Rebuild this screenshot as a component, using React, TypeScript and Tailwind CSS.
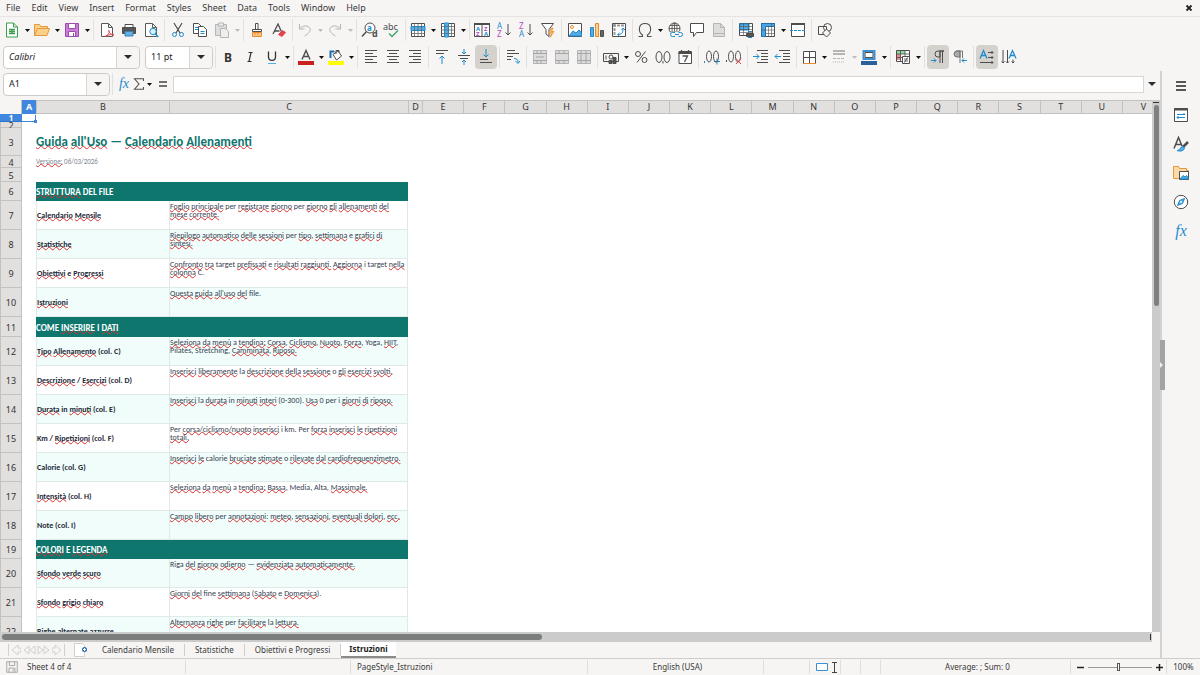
import React from 'react';
import type { ReactNode } from 'react';

type Row = {
  n: number
  h: string
  kind: 'empty' | 'title' | 'date' | 'section' | 'item'
  alt?: boolean
  label?: string
  lines?: string[]
}

// text between asterisks is flagged by the spell checker
const rows: Row[] = [
  { n: 1, h: 'h-[8px]', kind: 'empty' },
  { n: 2, h: 'h-[6px]', kind: 'empty' },
  { n: 3, h: 'h-[28px]', kind: 'title', label: "*Guida* *all'Uso* — *Calendario* *Allenamenti*" },
  { n: 4, h: 'h-[12px]', kind: 'date', label: '*Versione:* 06/03/2026' },
  { n: 5, h: 'h-[14px]', kind: 'empty' },
  { n: 6, h: 'h-[19px]', kind: 'section', label: '*STRUTTURA* DEL FILE' },
  { n: 7, h: 'h-[29px]', kind: 'item', label: '*Calendario* *Mensile*', lines: ['*Foglio* *principale* per *registrare* *giorno* per *giorno* *gli* *allenamenti* *del*', '*mese* *corrente.*'] },
  { n: 8, h: 'h-[29px]', kind: 'item', alt: true, label: '*Statistiche*', lines: ['*Riepilogo* *automatico* *delle* *sessioni* per *tipo*, *settimana* e *grafici* *di*', '*sintesi.*'] },
  { n: 9, h: 'h-[29px]', kind: 'item', label: '*Obiettivi* e *Progressi*', lines: ['*Confronto* *tra* target *prefissati* e *risultati* *raggiunti.* *Aggiorna* i target *nella*', '*colonna* C.'] },
  { n: 10, h: 'h-[29px]', kind: 'item', alt: true, label: '*Istruzioni*', lines: ["*Questa* *guida* *all'uso* *del* file."] },
  { n: 11, h: 'h-[20px]', kind: 'section', label: 'COME *INSERIRE* I *DATI*' },
  { n: 12, h: 'h-[29px]', kind: 'item', alt: true, label: '*Tipo* *Allenamento* (col. C)', lines: ['*Seleziona* *da* *menù* a *tendina:* *Corsa*, *Ciclismo*, *Nuoto*, *Forza*, Yoga, *HIIT*,', 'Pilates, Stretching, *Camminata*, *Riposo.*'] },
  { n: 13, h: 'h-[29px]', kind: 'item', label: '*Descrizione* / *Esercizi* (col. D)', lines: ['*Inserisci* *liberamente* la *descrizione* *della* *sessione* o *gli* *esercizi* *svolti.*'] },
  { n: 14, h: 'h-[29px]', kind: 'item', alt: true, label: '*Durata* in *minuti* (col. E)', lines: ['*Inserisci* la *durata* in *minuti* *interi* (0-300). *Usa* 0 per i *giorni* *di* *riposo.*'] },
  { n: 15, h: 'h-[29px]', kind: 'item', label: 'Km / *Ripetizioni* (col. F)', lines: ['Per *corsa/ciclismo/nuoto* *inserisci* i km. Per *forza* *inserisci* *le* *ripetizioni*', '*totali.*'] },
  { n: 16, h: 'h-[29px]', kind: 'item', alt: true, label: 'Calorie (col. G)', lines: ['*Inserisci* *le* calorie *bruciate* *stimate* o *rilevate* *dal* *cardiofrequenzimetro.*'] },
  { n: 17, h: 'h-[29px]', kind: 'item', label: '*Intensità* (col. H)', lines: ['*Seleziona* *da* *menù* a *tendina:* *Bassa*, Media, Alta, *Massimale.*'] },
  { n: 18, h: 'h-[29px]', kind: 'item', alt: true, label: 'Note (col. I)', lines: ['*Campo* *libero* per *annotazioni*: *meteo*, *sensazioni*, *eventuali* *dolori*, *ecc.*'] },
  { n: 19, h: 'h-[19px]', kind: 'section', label: '*COLORI* E *LEGENDA*' },
  { n: 20, h: 'h-[29px]', kind: 'item', alt: true, label: '*Sfondo* *verde* *scuro*', lines: ['Riga *del* *giorno* *odierno* — *evidenziata* *automaticamente.*'] },
  { n: 21, h: 'h-[29px]', kind: 'item', label: '*Sfondo* *grigio* *chiaro*', lines: ['*Giorni* *del* fine *settimana* (*Sabato* e *Domenica*).'] },
  { n: 22, h: 'h-[29px]', kind: 'item', alt: true, label: '*Righe* *alternate* *azzurre*', lines: ['*Alternanza* *righe* per *facilitare* la *lettura.*'] },
];

const wideCols = 'EFGHIJKLMNOPQRSTU'.split('');

const Spell = ({ text }: { text: string }) => (
  <>
    {text.split('*').map((part, i) =>
      i % 2 === 1 ? (
        <span key={i} className="underline decoration-[#d93030] decoration-wavy decoration-1 underline-offset-[-1px] [text-decoration-skip-ink:none]">{part}</span>
      ) : (
        <span key={i}>{part}</span>
      )
    )}
  </>
);

const Svg = ({ children, size = 'w-4 h-4' }: { children: ReactNode; size?: string }) => (
  <svg viewBox="0 0 16 16" fill="none" stroke="#4d4d4d" strokeWidth="1" className={`${size} shrink-0 overflow-visible`}>
    {children}
  </svg>
);

const T = ({ x, y, s, c = '#4d4d4d', b, children }: { x: number; y: number; s: number; c?: string; b?: boolean; children: ReactNode }) => (
  <text x={x} y={y} fontSize={s} fill={c} stroke="none" fontWeight={b ? 700 : 400} fontFamily="Noto Sans, sans-serif">{children}</text>
);

const Btn = ({ label, on, children }: { label: string; on?: boolean; children: ReactNode }) => (
  <button type="button" aria-label={label} className={on ? 'flex items-center justify-center w-[22px] h-6 shrink-0 rounded bg-[#d5d1cd]' : 'flex items-center justify-center w-[22px] h-6 shrink-0 rounded'}>
    <Svg>{children}</Svg>
  </button>
);

const Caret = ({ off, label }: { off?: boolean; label: string }) => (
  <button type="button" aria-label={label} className="flex items-center justify-center w-2 h-6 shrink-0">
    <svg viewBox="0 0 5 3" className="w-[5px] h-[3px]">
      <path d="M0 0h5L2.500 3z" fill={off ? '#bdbdbd' : '#111'} />
    </svg>
  </button>
);

const Sep = ({ tight }: { tight?: boolean }) => (
  <div className={tight ? 'flex justify-center w-1 h-[22px] shrink-0' : 'flex justify-center w-[5px] h-[22px] shrink-0'}>
    <div className="w-px bg-[#e3e1df]"></div>
  </div>
);

const BLUE = '#1e8bcd';
const GREY = '#b5b5b5';

const MenuBar = () => (
  <nav className="flex items-center h-[17px] px-1.5 border-b border-[#e6e4e2] text-[9px] leading-4 text-[#3a3a3a]">
    <div className="flex items-center gap-[11px]">
      {['File', 'Edit', 'View', 'Insert', 'Format', 'Styles', 'Sheet', 'Data', 'Tools', 'Window', 'Help'].map((m) => (
        <button key={m} type="button">{m}</button>
      ))}
    </div>
    <button type="button" aria-label="Close document" className="ml-auto">
      <svg viewBox="0 0 10 10" className="w-2.5 h-2.5"><path d="M2.5 2.5l5 5M7.5 2.5l-5 5" stroke="#222" strokeWidth="1.8" /></svg>
    </button>
  </nav>
);

const Page = ({ c = '#5a5a5a' }: { c?: string }) => <path d="M2.5 1.5h7l4 4v9h-11zM9.5 1.5v4h4" stroke={c} fill="#fff" />;

const StandardBar = () => (
  <div className="flex items-center h-[26px] pl-px">
    <Btn label="New">
      <path d="M2.5 1h7l4 4v10h-11zM9.5 1v4h4" stroke="#3a9f4c" fill="#fff" />
      <path d="M5 7.500h6M5 9.500h6M5 11.500h6M8 7v5" stroke="#3a9f4c" strokeWidth="1.300" />
    </Btn>
    <Caret label="New options" />
    <Btn label="Open"><path d="M.5 13.500v-11h5l1 2h7v2M.5 13.500l3-7h12l-2.500 7z" fill="#fbd08a" stroke="#e5973a" /></Btn>
    <Caret label="Open options" />
    <Btn label="Save">
      <path d="M1.500 1.500h13v13h-13z" fill="#c97fd4" stroke="#9b4bab" />
      <path d="M4.500 1.500h7v5h-7zM4.500 9.500h7v5h-7z" fill="#fff" stroke="#9b4bab" />
      <path d="M9.500 11v3" stroke="#9b4bab" />
    </Btn>
    <Caret label="Save options" />
    <Sep />
    <Btn label="Export as PDF">
      <Page />
      <path d="M6 14.500c3-1 5-4 4-6-1-1 0 4 5 4.500-3-1-6 0-9 1.500z" stroke="#e0434b" />
    </Btn>
    <Btn label="Print">
      <path d="M4 2.500h8V6H4z" fill="#fff" />
      <path d="M1.500 5.500h13v6h-13z" fill="#555" />
      <path d="M4 9.500h8v4.500H4z" fill="#63b1e5" stroke="#3c7eb0" />
    </Btn>
    <Btn label="Print preview">
      <Page />
      <circle cx="10" cy="9.500" r="3.200" stroke={BLUE} fill="#d9effb" /><path d="M12.300 12l3 3" stroke={BLUE} strokeWidth="1.400" />
    </Btn>
    <Sep />
    <Btn label="Cut">
      <path d="M4 1l6 10M12 1L6 11" strokeWidth="1.200" />
      <circle cx="4.500" cy="12.500" r="2" stroke={BLUE} /><circle cx="11.500" cy="12.500" r="2" stroke={BLUE} />
    </Btn>
    <Btn label="Copy">
      <path d="M1.500 1.500h5l3 3v7h-8z" fill="#fff" /><path d="M6.500 4.500h5l3 3v7h-8z" fill="#fff" />
      <path d="M3 5.500h3M3 7.500h3M8.500 9.500h4M8.500 11.500h4" stroke={BLUE} />
    </Btn>
    <Btn label="Paste"><path d="M1.500 2.500h11v11h-11z" fill="#ddd" stroke={GREY} /><path d="M4.500 1h5v3h-5zM6.500 6.500h5l3 3v6h-8z" fill="#eee" stroke={GREY} /></Btn>
    <Caret label="Paste options" off />
    <Sep />
    <Btn label="Clone formatting">
      <path d="M6.500 1.500h2.500v6h-2.500zM3.500 7.500h9v2h-9z" fill="#fff" /><path d="M3.500 10.500h9v4h-9z" fill="#fbc98c" stroke="#e58a2e" /><path d="M6 11v2M9 11v2" stroke="#e58a2e" />
    </Btn>
    <Btn label="Clear formatting">
      <path d="M2 12L7 2l4 9M3.500 9h5" strokeWidth="1.300" />
      <path d="M7.500 12.500l4-4 3 2-3.500 4z" fill="#e5444f" stroke="#e5444f" />
    </Btn>
    <Sep tight />
    <Btn label="Undo"><path d="M2.500 2v5h5M2.500 7c3-4 9-4 10.500-.5 1 3-2 5.500-5.500 7.500" stroke={GREY} /></Btn>
    <Caret label="Undo list" off />
    <Btn label="Redo"><path d="M13.500 2v5h-5M13.500 7c-3-4-9-4-10.500-.5-1 3 2 5.500 5.500 7.500" stroke={GREY} /></Btn>
    <Caret label="Redo list" off />
    <Sep />
    <Btn label="Find and replace">
      <circle cx="8" cy="6" r="5" fill="#fff" /><path d="M4.500 9.500L0 14.500" strokeWidth="1.400" />
      <T x={5} y={9} s={8} c={BLUE} b>a</T><T x={10} y={15} s={9} b>d</T>
    </Btn>
    <Btn label="Spelling"><T x={-1} y={8} s={9}>abc</T><path d="M5 11.500l3 3 6-6" stroke="#35a56b" strokeWidth="1.300" /></Btn>
    <Sep tight />
    <Btn label="Row">
      <path d="M1.500 1.500h13v13h-13z" fill="#fff" /><path d="M1 4.500h14v4H1z" fill="#57ace4" stroke={BLUE} />
      <path d="M1.500 11.500h13M4.500 1.500v13M8 1.500v13M11.500 1.500v13" stroke="#666" strokeWidth=".8" />
    </Btn>
    <Caret label="Row options" />
    <Btn label="Column">
      <path d="M1.500 1.500h13v13h-13z" fill="#fff" /><path d="M4.500 1h4v14h-4z" fill="#57ace4" stroke={BLUE} />
      <path d="M1.500 4.500h13M1.500 8h13M1.500 11.500h13M11.500 1.500v13" stroke="#666" strokeWidth=".8" />
    </Btn>
    <Caret label="Column options" />
    <Sep tight />
    <Btn label="Sort">
      <path d="M.5 1.500h15v13H.5zM8 1.500v13" fill="#fff" /><path d="M0 2h16" strokeWidth="2" />
      <T x={2} y={9} s={6} c={BLUE} b>A</T><T x={2} y={14} s={6} c="#b04cc0" b>Z</T>
      <T x={10} y={9} s={6} c="#b04cc0" b>Z</T><T x={10} y={14} s={6} c={BLUE} b>A</T>
    </Btn>
    <Btn label="Sort ascending">
      <T x={1} y={7} s={8} c={BLUE}>A</T><T x={1} y={15} s={8} c="#b04cc0">Z</T><path d="M12 2v11M9.500 10.500L12 13l2.500-2.500" />
    </Btn>
    <Btn label="Sort descending">
      <T x={1} y={7} s={8} c="#b04cc0">Z</T><T x={1} y={15} s={8} c={BLUE}>A</T><path d="M12 2v11M9.500 10.500L12 13l2.500-2.500" />
    </Btn>
    <Btn label="AutoFilter">
      <path d="M1.500 1.500h12l-4.500 6v7l-3-2.500v-4.500z" fill="#fff" /><path d="M11.500 6l-3 5h3l-1.500 4.500 4-6h-2.500l1.500-3.500z" fill="#fbbf6b" stroke="#e58a2e" strokeWidth=".8" />
    </Btn>
    <Sep />
    <Btn label="Insert image">
      <path d="M1.500 1.500h13v13h-13z" fill="#fff" /><path d="M2 14l4-5 3 2 3-3 2.500 3v3z" fill="#57ace4" stroke={BLUE} /><circle cx="5" cy="5" r="1.500" stroke="#e58a2e" />
    </Btn>
    <Btn label="Insert chart">
      <path d="M1.500 5.500h3v9h-3z" fill="#57ace4" stroke={BLUE} /><path d="M6.500 1.500h3v13h-3z" fill="#fbd08a" stroke="#e58a2e" /><path d="M11.500 8.500h3v6h-3z" fill="#666" />
    </Btn>
    <Btn label="Pivot table">
      <path d="M1.500 1.500h13v13h-13z" fill="#fff" /><path d="M2 3.500h12M3.500 2v12" stroke="#999" strokeWidth="2" strokeDasharray="3 1" />
      <path d="M7 12.500c4 0 5-2 5-6M10.500 8L12 6l2 2M8.500 11L6.500 12.500l2 1.500" stroke={BLUE} />
    </Btn>
    <Sep tight />
    <Btn label="Special character"><path d="M1.500 14.500h4v-1.500C1 10 1 1.500 8 1.500s7 8.500 2.500 11.500v1.500h4" strokeWidth="1.100" /></Btn>
    <Caret label="Special characters" />
    <Btn label="Hyperlink">
      <circle cx="7.500" cy="6.500" r="5.500" /><path d="M7.500 1v11M2 6.500h11M3 3.500h9M3 9.500h9" strokeWidth=".8" /><ellipse cx="7.500" cy="6.500" rx="2.500" ry="5.500" strokeWidth=".8" />
      <path d="M3.500 9.500h12v6h-12z" fill="#f6f5f4" stroke="none" />
      <path d="M8 10.500H5.500a2 2 0 000 4H8M11.500 10.500h2a2 2 0 010 4h-2M8 12.500h4" stroke={BLUE} />
    </Btn>
    <Btn label="Comment"><path d="M1.500 1.500h13v9h-7l-3 4v-4h-3z" fill="#fff" /></Btn>
    <Btn label="Headers and footers"><path d="M2.500 1.500h7l4 4v9h-11z" stroke={GREY} fill="#ddd" /><path d="M3 11.500h10M9.500 1.500v4h4" stroke={GREY} /></Btn>
    <Sep />
    <Btn label="Print area">
      <path d="M1.500 1.500h13v12h-13z" fill="#fff" /><path d="M2 2h9v6H2z" fill="#57ace4" stroke={BLUE} /><path d="M1.500 4.500h13M1.500 7.500h13M1.500 10.500h13M5.500 2v12M10.500 2v12" strokeWidth=".6" />
      <path d="M8.500 11.500h7v3h-7z" fill="#555" /><path d="M10 9.500h4M10 15.500h4" stroke="#3c7eb0" />
    </Btn>
    <Btn label="Freeze rows and columns">
      <path d="M1.500 1.500h13v13h-13z" fill="#fff" /><path d="M1.500 1.500h13v3h-9v10h-4z" fill="#4ea3e0" stroke="#1f6fac" /><path d="M5.500 8h9M5.500 11.500h9M8.500 4.500v10M11.500 1.500v13M1 8h4" strokeWidth=".6" />
    </Btn>
    <Caret label="Freeze options" />
    <Btn label="Split window"><path d="M1.500 1.500h13v13h-13z" fill="#fff" /><path d="M1 2h14" strokeWidth="2" /><path d="M0 8.500h16" stroke={BLUE} strokeDasharray="3 1" /></Btn>
    <Sep />
    <Btn label="Show draw functions"><path d="M1.500 4.500h8v8h-8z" /><circle cx="10.500" cy="5.500" r="4" /><path d="M9.500 7l4 4-4 4-4-4z" fill="#f6f5f4" /></Btn>
  </div>
);

const Combo = ({ id, label, value, italic, width }: { id: string; label: string; value: string; italic?: boolean; width: string }) => (
  <div className={`flex items-stretch h-[23px] shrink-0 rounded border border-[#cfcac6] bg-white ${width}`}>
    <label htmlFor={id} className="sr-only">{label}</label>
    <input id={id} defaultValue={value} className={`flex-1 min-w-0 pl-[5px] bg-transparent text-[9px] leading-4 text-[#222] outline-none ${italic ? 'italic' : ''}`} />
    <button type="button" aria-label={`${label} list`} className="flex items-center justify-center w-[23px] rounded-r border-l border-[#d9d5d2] bg-[#f6f5f4]">
      <svg viewBox="0 0 8 4" className="w-2 h-1"><path d="M0 0h8L4 4z" fill="#2b2b2b" /></svg>
    </button>
  </div>
);

const MergeIcon = ({ d }: { d: string }) => (
  <>
    <path d="M1.500 1.500h13v13h-13z" fill="#dcdcdc" stroke={GREY} />
    <path d={d} stroke="#a5a5a5" />
  </>
);

const FormatBar = () => (
  <div className="flex items-center h-7 pl-[3px]">
    <Combo id="font-name" label="Font name" value="Calibri" italic width="w-[137px]" />
    <div className="w-[5px] shrink-0"></div>
    <Combo id="font-size" label="Font size" value="11 pt" width="w-[68px]" />
    <Sep tight />
    <Btn label="Bold"><T x={4} y={12.5} s={12} c="#333" b>B</T></Btn>
    <Btn label="Italic"><path d="M6.500 3.500h4M5.500 12.500h4M9 3.500L7 12.500" stroke="#333" strokeWidth="1.200" /></Btn>
    <Btn label="Underline"><path d="M4.500 2.500v5.500c0 4.500 7 4.500 7 0V2.500" stroke="#333" strokeWidth="1.300" /><path d="M4 14.500h8" stroke="#57ace4" /></Btn>
    <Caret label="Underline options" />
    <Sep tight />
    <Btn label="Font color"><path d="M4 10.500L8 1.500l4 9M5.500 7.500h5" strokeWidth="1.400" /><path d="M0 14h16" stroke="#c9211e" strokeWidth="4" /></Btn>
    <Caret label="Font colors" />
    <Btn label="Background color">
      <path d="M5 5.500l5-3.500 3.500 5-5 4z" fill="#fff" /><path d="M8 5V1.500h3v2" /><path d="M2.500 9V2.500h4" stroke="#1f6fac" strokeWidth="2" /><path d="M0 14h16" stroke="#ffff00" strokeWidth="4" />
    </Btn>
    <Caret label="Background colors" />
    <Sep />
    <Btn label="Align left"><path d="M2 1.500h12M2 4.500h8M2 7.500h12M2 10.500h8M2 13.500h12" /></Btn>
    <Btn label="Center horizontally"><path d="M2 1.500h12M4 4.500h8M2 7.500h12M4 10.500h8M2 13.500h12" /></Btn>
    <Btn label="Align right"><path d="M2 1.500h12M6 4.500h8M2 7.500h12M6 10.500h8M2 13.500h12" /></Btn>
    <Sep />
    <Btn label="Align top"><path d="M2 1.500h12M2 4.500h8" /><path d="M8 15V7M5.500 9.500L8 7l2.500 2.500" stroke={BLUE} /></Btn>
    <Btn label="Center vertically"><path d="M2 6.500h12M4 9.500h8" /><path d="M8 0v5M6 3l2 2 2-2M8 16v-5M6 13l2-2 2 2" stroke={BLUE} /></Btn>
    <Btn label="Align bottom" on><path d="M2 10.500h8M2 13.500h12" /><path d="M8 0v8M5.500 5.500L8 8l2.500-2.500" stroke={BLUE} /></Btn>
    <Sep />
    <Btn label="Wrap text"><path d="M2 1.500h8M2 4.500h12M2 7.500h6M2 10.500h4" /><path d="M9 9.500c3 0 4 1 4 4M10.500 12l2.500 2.500L15 12" stroke={BLUE} /></Btn>
    <Sep />
    <Btn label="Merge and center cells"><MergeIcon d="M1.500 4.500h13M1.500 11.500h13M5 1.500v3M9 1.500v3M5 11.500v3M9 11.500v3M4 8h8" /></Btn>
    <Btn label="Merge cells"><MergeIcon d="M1.500 4.500h13M1.500 11.500h13M5 1.500v3M10 1.500v3M5 11.500v3M10 11.500v3" /></Btn>
    <Btn label="Unmerge cells"><MergeIcon d="M1.500 4.500h13M1.500 11.500h13M5 1.500v13M10 1.500v13" /></Btn>
    <Sep />
    <Btn label="Currency">
      <path d="M.5 4.500h15v8H.5z" /><circle cx="8" cy="8" r="2" /><path d="M3 6.500v4" /><path d="M6 11.500h3v3H6zM10 8.500h3v6h-3z" fill="#555" />
    </Btn>
    <Caret label="Currency options" />
    <Btn label="Percent"><circle cx="5" cy="5" r="2.500" /><circle cx="11.500" cy="11" r="2.500" /><path d="M12.500 2.500l-8.500 11" /></Btn>
    <Btn label="Number"><ellipse cx="4" cy="8" rx="3" ry="5.500" /><ellipse cx="12" cy="8" rx="3" ry="5.500" /><path d="M8 12v2.500" /></Btn>
    <Btn label="Date"><path d="M2 2.500h12.500v12H2z" fill="#fff" /><path d="M1.500 4h13.500" strokeWidth="2" /><path d="M4.500 1v3M11.500 1v3M5.500 7h5l-3 6" strokeWidth="1.300" /></Btn>
    <Sep />
    <Btn label="Add decimal place"><path d="M.5 12v2M13 9.500v6M10 12.500h6" stroke={BLUE} /><ellipse cx="5" cy="7.500" rx="2.500" ry="5.500" /><ellipse cx="12" cy="7.500" rx="2.500" ry="5.500" /></Btn>
    <Btn label="Delete decimal place"><path d="M.5 11v2" /><ellipse cx="5" cy="7.500" rx="2.500" ry="5.500" /><ellipse cx="12" cy="7.500" rx="2.500" ry="5.500" /><path d="M10 9.500l5 5.500M15 9.500l-5 5.500" stroke="#e5444f" /></Btn>
    <Sep />
    <Btn label="Increase indent"><path d="M4 1.500h11M8 4.500h7M8 7.500h7M8 10.500h7M4 13.500h11" /><path d="M0 7.500h6M3.500 5L6 7.500 3.500 10" stroke={BLUE} /></Btn>
    <Btn label="Decrease indent"><path d="M4 1.500h11M8 4.500h7M8 7.500h7M8 10.500h7M4 13.500h11" /><path d="M6 7.500H0M2.500 5L0 7.500 2.500 10" stroke={BLUE} /></Btn>
    <Sep tight />
    <Btn label="Borders"><path d="M2.500 2.500h12v12h-12zM8.500 2.500v12M2.500 8.500h12" fill="#fff" /><path d="M2 14.500h13" stroke="#e58a2e" /></Btn>
    <Caret label="Border options" />
    <Btn label="Border style"><path d="M2 2h12M2 5h12" stroke={GREY} strokeWidth="2" /><path d="M2 9.500h12" stroke={GREY} strokeDasharray="3 1" /><path d="M2 13h12" stroke={GREY} strokeDasharray="1 1" /></Btn>
    <Caret label="Border styles" off />
    <Btn label="Border color"><path d="M2.500 2h11v8h-11z" fill="#fff" stroke="#3c8fd0" strokeWidth="2" /><path d="M4 3.500h8v5H4z" /><path d="M0 14h16" stroke="#2a6099" strokeWidth="4" /></Btn>
    <Caret label="Border colors" />
    <Sep tight />
    <Btn label="Conditional formatting">
      <path d="M1.500 1.500h13v11h-13z" fill="#fff" /><path d="M2 2h8v3H2z" fill="#8fd6a0" stroke="none" /><path d="M2 5h4v6H2z" fill="#f08a8a" stroke="none" /><path d="M1.500 5h13M1.500 8.500h13M5.500 1.500v11M10 1.500v11" strokeWidth=".8" />
      <path d="M7.500 7.500h7v7h-7z" fill="#fff" /><path d="M9 10h4M9 12h4M12.500 8.500l-3 5" strokeWidth=".8" />
    </Btn>
    <Caret label="Conditional options" />
    <Sep />
    <Btn label="Left-to-right" on><path d="M14 2h-6a3 3 0 000 6h2V2zM10 2v12M12.500 2v12" fill="none" /><path d="M1 11.500h5M4 9.500l2 2-2 2" stroke={BLUE} /></Btn>
    <Btn label="Right-to-left"><path d="M8 2H5a3 3 0 000 6h3V2z" fill="#aaa" stroke="#777" /><path d="M4 2h6.500M8 2v12M10.500 2v7" stroke="#777" /><path d="M15 11.500h-5M12 9.500l-2 2 2 2" stroke={BLUE} /></Btn>
    <Sep />
    <Btn label="Text direction from left to right" on><path d="M1 9.500L4.500 1.500 8 9.500M2.500 6.500h4" stroke={BLUE} strokeWidth="1.300" /><path d="M9 3.500h5M12.500 2l1.500 1.500L12.500 5M9 8.500h5M12.500 7l1.500 1.500-1.500 1.500M1 13.500h13M12.500 12l1.500 1.500-1.500 1.500" /></Btn>
    <Btn label="Text direction from top to bottom"><path d="M8 9.500L11.500 1.500 15 9.500M9.500 6.500h4" stroke={BLUE} strokeWidth="1.300" /><path d="M2 1v13M.5 12.500L2 14l1.500-1.500M6.500 1v13M5 12.500L6.500 14 8 12.500M12 10.500V14M10.500 12.500L12 14l1.500-1.500" /></Btn>
  </div>
);

const FormulaBar = () => (
  <div className="flex items-center h-[29px] pb-[3px] pl-[3px]">
    <Combo id="name-box" label="Name Box" value="A1" width="w-[107px]" />
    <Sep tight />
    <button type="button" aria-label="Function Wizard" className="w-[18px] ml-px font-['Liberation_Serif',serif] italic text-sm leading-4 text-[#1e8bcd]">fx</button>
    <button type="button" aria-label="Select Function" className="flex justify-center w-3">
      <Svg size="w-3 h-3"><path d="M14 4V1H2l6 7-6 7h12v-3" strokeWidth="1.400" /></Svg>
    </button>
    <Caret label="Functions" />
    <button type="button" aria-label="Formula" className="flex justify-center w-5">
      <svg viewBox="0 0 8 6" className="w-2 h-1.5"><path d="M0 1h8M0 5h8" stroke="#444" strokeWidth="1.400" /></svg>
    </button>
    <input aria-label="Input line" className="flex-1 min-w-0 h-[17px] bg-white border border-[#d8d5d2] text-[9px] outline-none" />
    <button type="button" aria-label="Expand Formula Bar" className="flex items-center justify-center w-4 h-4">
      <svg viewBox="0 0 8 4" className="w-2 h-1"><path d="M0 0h8L4 4z" fill="#2b2b2b" /></svg>
    </button>
  </div>
);

const head = 'h-[14px] p-0 border-l border-b border-t border-[#c4c2c0] bg-[#e1e0df] font-normal text-[9px] leading-3 text-center';
const edge = 'border-l border-b border-[#dfe9e8]';
const cellFont = 'p-0 font-[Carlito,Lato,sans-serif]';

const SheetRow = ({ row }: { row: Row }) => {
  const { n, h, kind, alt, label = '', lines = [] } = row;
  const fill = alt ? 'bg-[#f0fdfa]' : 'bg-white';

  return (
    <tr>
      <th scope="row" className={n === 1 ? 'p-0 border-b border-[#2f74c8] bg-[#3f87de] text-white font-bold text-[8px]' : 'p-0 border-x border-b border-[#c4c2c0] bg-[#e1e0df] text-[#333] font-normal text-[9px]'}>
        <div className={`flex items-center justify-center overflow-hidden -mb-px leading-none ${h}`}>{n}</div>
      </th>
      <td className="p-0">
        {n === 1 && (
          <div className="relative h-[7px] border-b border-r border-[#3f87de]">
            <span className="absolute -right-0.5 -bottom-0.5 w-[3px] h-[3px] bg-[#3f87de]"></span>
          </div>
        )}
      </td>
      {kind === 'item' ? (
        <>
          <td className={`${cellFont} ${edge} ${fill}`}>
            <p className="whitespace-nowrap text-[8px] leading-none font-bold text-[#1f2937]"><Spell text={label} /></p>
          </td>
          <td className={`border-r align-top ${cellFont} ${edge} ${fill}`}>
            <div className="whitespace-nowrap pt-px text-[8px] leading-[8px] text-[#374151]">
              {lines.map((l) => <p key={l}><Spell text={l} /></p>)}
            </div>
          </td>
        </>
      ) : (
        <td colSpan={2} className={kind === 'section' ? `${cellFont} bg-[#0f766e]` : cellFont}>
          {kind === 'section' && <p className="text-[9px] leading-none font-bold text-white"><Spell text={label} /></p>}
          {kind === 'title' && <p className="pb-0.5 text-[13px] leading-none font-bold text-[#0f766e]"><Spell text={label} /></p>}
          {kind === 'date' && <p className="pb-0.5 text-[7px] leading-none text-[#7d8794]"><Spell text={label} /></p>}
        </td>
      )}
      <td colSpan={19} className="p-0"></td>
    </tr>
  );
};

const Sheet = () => (
  <div className="flex-1 min-w-0 overflow-hidden bg-white">
    <table className="w-full table-fixed border-separate border-spacing-0 text-[#333]">
      <colgroup>
        <col className="w-[22px]" />
        <col className="w-[14px]" />
        <col className="w-[133px]" />
        <col className="w-[239px]" />
        <col className="w-[14px]" />
        {wideCols.map((c) => <col key={c} />)}
        <col className="w-[30px]" />
      </colgroup>
      <thead>
        <tr>
          <td className="p-0 border-r border-[#c4c2c0] bg-[#f6f5f4]"></td>
          <th scope="col" className="p-0 bg-[#3f87de] text-white text-[9px] leading-3 font-bold text-center">A</th>
          <th scope="col" className={head}>B</th>
          <th scope="col" className={head}>C</th>
          <th scope="col" className={head}>D</th>
          {wideCols.map((c) => <th scope="col" key={c} className={head}>{c}</th>)}
          <th scope="col" className={head}><div className="pl-3">V</div></th>
        </tr>
      </thead>
      <tbody>
        {rows.map((r) => <SheetRow key={r.n} row={r} />)}
      </tbody>
    </table>
  </div>
);

const SideBar = () => (
  <aside className="relative flex flex-col items-center w-10 shrink-0 border-l-2 border-[#d4d2d0]">
    {[
      { name: 'Sidebar settings', art: <path d="M3 4h10M3 8h10M3 12h10" stroke="#222" strokeWidth="1.500" /> },
      { name: 'Properties', art: <><path d="M1.500 1.500h13v13h-13z" fill="#fff" /><path d="M1 2.500h14" strokeWidth="2" /><path d="M4 7.500h8M10.500 6L12 7.500M4 10.500h8M5.500 9L4 10.500l1.500 1.500" stroke={BLUE} /></> },
      { name: 'Styles', art: <><path d="M1 12.500L5.500 1.500 9 10M2.500 8.500h6" strokeWidth="1.500" /><path d="M15 6l-5 5" strokeWidth="2.500" /><path d="M10 10.500c-3 0-2 3.500-6 4 4 1.500 7 0 7.500-2.500z" fill="#57ace4" stroke={BLUE} /></> },
      { name: 'Gallery', art: <><path d="M.5 13.500v-12h5l1 2h7v2h2v8z" fill="#fbd9a8" stroke="#e5973a" /><path d="M6.500 6.500h9v8h-9z" fill="#fff" /><path d="M7 14l3-3.500 2 1.500 1.500-1.500 1.500 2V14z" fill="#57ace4" stroke={BLUE} /></> },
      { name: 'Navigator', art: <><circle cx="8" cy="8" r="6.700" fill="#fff" /><path d="M11.500 4.500L9.500 9.500l-5 2 2-5z" fill="#57ace4" stroke={BLUE} /><circle cx="8" cy="8" r="1" fill="#fff" stroke="none" /></> },
    ].map((b) => (
      <button key={b.name} type="button" aria-label={b.name} className="flex items-center justify-center w-7 h-[29px]"><Svg>{b.art}</Svg></button>
    ))}
    <button type="button" aria-label="Functions" className="w-7 h-[29px] font-['Liberation_Serif',serif] italic text-base leading-none text-[#1e8bcd]">fx</button>
    <button type="button" aria-label="Hide sidebar" className="absolute -left-0.5 top-1/2 -translate-y-1/2 flex items-center w-[5px] h-[50px] bg-[#a5a3a1]">
      <svg viewBox="0 0 3 6" className="w-[3px] h-1.5"><path d="M0 0l3 3-3 3z" fill="#eee" /></svg>
    </button>
  </aside>
);

const tabs = ['Calendario Mensile', 'Statistiche', 'Obiettivi e Progressi'];

const TabBar = () => (
  <div className="flex items-center h-4 pl-1.5 text-[8px] text-[#3a3a3a]">
    {['First', 'Previous', 'Next', 'Last'].map((n) => (
      <button key={n} type="button" aria-label={`${n} sheet`} className="flex justify-center w-[15px]">
        <svg viewBox="0 0 14 12" fill="none" stroke="#d2d0ce" className="w-3.5 h-3">
          {n === 'First' && <path d="M1.500 0v12M11 1L5 6l6 5V8h3V4h-3z" />}
          {n === 'Previous' && <path d="M7 2L2 6l5 4zM13 2L8 6l5 4z" />}
          {n === 'Next' && <path d="M1 2l5 4-5 4zM7 2l5 4-5 4z" />}
          {n === 'Last' && <path d="M12.500 0v12M3 1l6 5-6 5V8H0V4h3z" />}
        </svg>
      </button>
    ))}
    <button type="button" aria-label="Add sheet" className="flex w-[26px] pl-2">
      <svg viewBox="0 0 14 14" className="w-3.5 h-3.5"><path d="M.5.5h8l2 2v11H.5z" fill="#fff" stroke="#d2d0ce" /><circle cx="10.500" cy="6.500" r="2.500" fill="#2d6cb5" /><path d="M10.500 5v3M9 6.500h3" stroke="#fff" /></svg>
    </button>
    {tabs.map((t) => (
      <React.Fragment key={t}>
        <button type="button" className="px-2.5 whitespace-nowrap">{t}</button>
        <div className="w-px h-3 bg-[#cfcdcb]"></div>
      </React.Fragment>
    ))}
    <button type="button" className="h-4 px-2 bg-white border-b-2 border-[#8b8b8b] font-bold text-[#222] whitespace-nowrap leading-3">Istruzioni</button>
  </div>
);

const cell = 'h-3.5 border-r border-[#e0dedc]';

const StatusBar = () => (
  <footer className="flex items-center h-[17px] shrink-0 border-t border-[#cfcdcb] text-[8px] leading-3.5 text-[#3a3a3a]">
    <div className={`flex items-center gap-[9px] w-[186px] pl-1.5 ${cell}`}>
      <svg viewBox="0 0 16 16" fill="none" stroke="#a8a6a4" className="w-3 h-3"><path d="M1 1h14v14H1zM4.500 1v5h7V1M4 15V9.500h8V15M9.500 11v3" strokeWidth="1.300" /></svg>
      <span>Sheet 4 of 4</span>
    </div>
    <div className={`w-[165px] ${cell}`}></div>
    <div className={`flex-1 pl-1.5 ${cell}`}>PageStyle_Istruzioni</div>
    <div className={`w-[176px] pl-1 text-center ${cell}`}>English (USA)</div>
    <div className={`w-[46px] ${cell}`}></div>
    <div className={`flex items-center gap-1 w-[31px] pl-1.5 ${cell}`}>
      <svg viewBox="0 0 12 8" className="w-3 h-2"><path d="M.5.5h11v7H.5z" fill="#fff" stroke="#3c8fd0" /></svg>
      <svg viewBox="0 0 5 11" className="w-[5px] h-[11px]"><path d="M0 .5h5M0 10.500h5M2.500 0v11" stroke="#444" fill="none" /></svg>
    </div>
    <div className={`w-5 ${cell}`}></div>
    <div className={`w-5 ${cell}`}></div>
    <div className={`w-[190px] pl-1 text-center ${cell}`}>Average: ; Sum: 0</div>
    <div className={`flex items-center justify-center gap-1 w-24 pl-0.5 ${cell}`}>
      <button type="button" aria-label="Zoom out"><svg viewBox="0 0 7 7" className="w-[7px] h-[7px]"><path d="M0 3.500h7" stroke="#222" strokeWidth="1.500" /></svg></button>
      <input type="range" aria-label="Zoom" min="0" max="100" defaultValue="49" className="appearance-none w-16 h-2 bg-transparent [&::-webkit-slider-runnable-track]:h-2 [&::-webkit-slider-runnable-track]:bg-[linear-gradient(#9a9a9a,#9a9a9a)] [&::-webkit-slider-runnable-track]:bg-[length:100%_1px] [&::-webkit-slider-runnable-track]:bg-center [&::-webkit-slider-runnable-track]:bg-no-repeat [&::-webkit-slider-thumb]:appearance-none [&::-webkit-slider-thumb]:w-[3px] [&::-webkit-slider-thumb]:h-2 [&::-webkit-slider-thumb]:border [&::-webkit-slider-thumb]:border-[#555] [&::-webkit-slider-thumb]:bg-white" />
      <button type="button" aria-label="Zoom in"><svg viewBox="0 0 7 7" className="w-[7px] h-[7px]"><path d="M0 3.500h7M3.500 0v7" stroke="#222" strokeWidth="1.500" /></svg></button>
    </div>
    <div className="w-[33px] text-center">100%</div>
  </footer>
);

const App = () => {
  return (
    <div className="flex flex-col h-screen overflow-hidden bg-[#f6f5f4] font-['Noto_Sans',sans-serif]">
      <MenuBar />
      <StandardBar />
      <FormatBar />
      <main className="flex flex-1 min-h-0">
        <div className="flex flex-col flex-1 min-w-0">
          <FormulaBar />
          <div className="flex flex-1 min-h-0">
            <Sheet />
            <div className="flex flex-col items-center w-2 shrink-0 pt-0.5 bg-[#cbcbcb]">
              <div className="w-1.5 h-px bg-[#333]"></div>
              <div className="w-[5px] h-[38%] mt-0.5 rounded-full bg-[#7f7f7f]"></div>
            </div>
          </div>
          <div className="flex items-center h-2.5 mr-2 pl-0.5 pr-px bg-[#cbcbcb]">
            <div className="w-[47%] h-1.5 rounded-full bg-[#7b7d7c]"></div>
            <div className="w-px h-1.5 ml-auto bg-[#333]"></div>
          </div>
          <TabBar />
        </div>
        <SideBar />
      </main>
      <StatusBar />
    </div>
  );
};

export default App;
